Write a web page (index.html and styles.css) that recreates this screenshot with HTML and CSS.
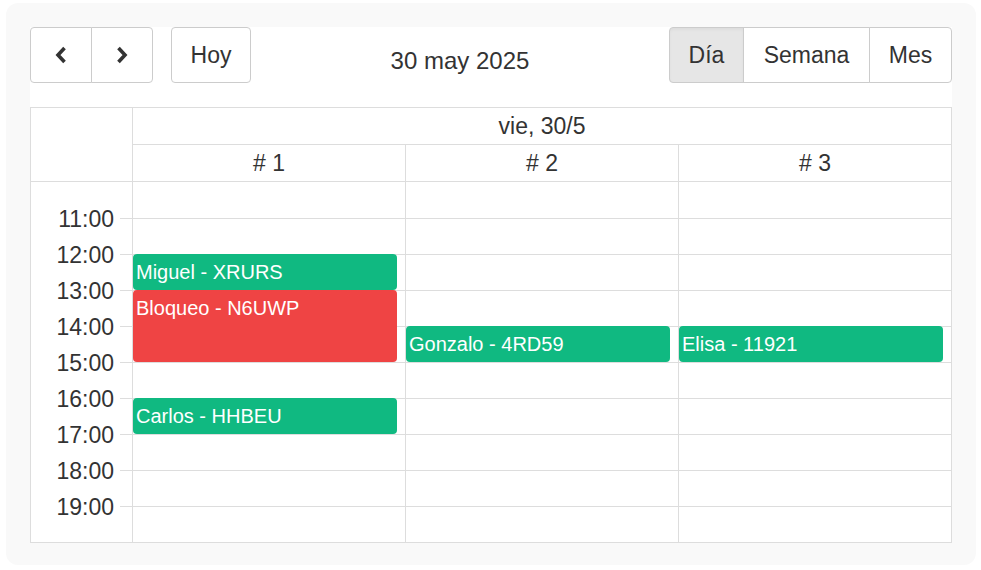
FILE: index.html
```html
<!DOCTYPE html>
<html lang="es">
<head>
    <meta charset="UTF-8">
    <meta name="viewport" content="width=device-width, initial-scale=1.0">
    <title>Agenda - Día</title>
    <link rel="stylesheet" href="styles.css">
</head>
<body>
    <div class="calendar-wrap">
        <div class="calendar">
            <div class="toolbar">
                <div class="toolbar-left">
                    <div class="btn-group">
                        <button class="btn btn-icon prev-btn">
                            <svg width="14" height="18" viewBox="0 0 14 18"><polyline points="10.5,2 4,9 10.5,16" fill="none" stroke="#333" stroke-width="3.6"/></svg>
                        </button>
                        <button class="btn btn-icon next-btn">
                            <svg width="14" height="18" viewBox="0 0 14 18"><polyline points="3.5,2 10,9 3.5,16" fill="none" stroke="#333" stroke-width="3.6"/></svg>
                        </button>
                    </div>
                    <button class="btn today-btn">Hoy</button>
                </div>

                <h2 class="title">30 may 2025</h2>

                <div class="btn-group">
                    <button class="btn day-btn active">Día</button>
                    <button class="btn week-btn">Semana</button>
                    <button class="btn month-btn">Mes</button>
                </div>
            </div>

            <div class="grid">
                <div class="grid-head">
                    <div class="axis-head"></div>
                    <div class="day-head">vie, 30/5</div>
                    <div class="res-head"># 1</div>
                    <div class="res-head"># 2</div>
                    <div class="res-head"># 3</div>
                </div>

                <div class="grid-body">
                    <div class="axis">
                        <div class="axis-slot"><span>11:00</span></div>
                        <div class="axis-slot"><span>12:00</span></div>
                        <div class="axis-slot"><span>13:00</span></div>
                        <div class="axis-slot"><span>14:00</span></div>
                        <div class="axis-slot"><span>15:00</span></div>
                        <div class="axis-slot"><span>16:00</span></div>
                        <div class="axis-slot"><span>17:00</span></div>
                        <div class="axis-slot"><span>18:00</span></div>
                        <div class="axis-slot"><span>19:00</span></div>
                        <div class="axis-slot last"></div>
                    </div>

                    <div class="column" id="res1">
                        <div class="slot"></div><div class="slot"></div><div class="slot"></div><div class="slot"></div><div class="slot"></div>
                        <div class="slot"></div><div class="slot"></div><div class="slot"></div><div class="slot"></div><div class="slot"></div>
                        <div class="event booking" style="top: 72px; height: 36px;">Miguel - XRURS</div>
                        <div class="event block" style="top: 108px; height: 72px;">Bloqueo - N6UWP</div>
                        <div class="event booking" style="top: 216px; height: 36px;">Carlos - HHBEU</div>
                    </div>

                    <div class="column" id="res2">
                        <div class="slot"></div><div class="slot"></div><div class="slot"></div><div class="slot"></div><div class="slot"></div>
                        <div class="slot"></div><div class="slot"></div><div class="slot"></div><div class="slot"></div><div class="slot"></div>
                        <div class="event booking" style="top: 144px; height: 36px;">Gonzalo - 4RD59</div>
                    </div>

                    <div class="column" id="res3">
                        <div class="slot"></div><div class="slot"></div><div class="slot"></div><div class="slot"></div><div class="slot"></div>
                        <div class="slot"></div><div class="slot"></div><div class="slot"></div><div class="slot"></div><div class="slot"></div>
                        <div class="event booking" style="top: 144px; height: 36px;">Elisa - 11921</div>
                    </div>
                </div>
            </div>
        </div>
    </div>
</body>
</html>
```

FILE: styles.css
```css
* {
    margin: 0;
    padding: 0;
    box-sizing: border-box;
    font-family: 'Liberation Sans', Arial, sans-serif;
}

:root {
    --line: #dddddd;
    --btn-border: #cccccc;
    --text: #333333;
    --green: #10b981;
    --red: #ef4444;
}

body {
    background-color: #ffffff;
    color: var(--text);
}

.calendar-wrap {
    width: 970px;
    margin: 3px 0 0 6px;
    padding: 24px 24px 22px;
    background-color: #f9f9f9;
    border-radius: 12px;
}

.calendar {
    background-color: #ffffff;
}

/* toolbar */
.toolbar {
    display: flex;
    justify-content: space-between;
    align-items: center;
    height: 56px;
    margin-bottom: 24px;
}

.toolbar-left {
    display: flex;
    gap: 18px;
}

.btn-group {
    display: flex;
}

.btn {
    height: 56px;
    background-color: #ffffff;
    border: 1px solid var(--btn-border);
    border-radius: 4px;
    color: var(--text);
    font-size: 23px;
    cursor: pointer;
    display: flex;
    align-items: center;
    justify-content: center;
}

.btn-group .btn + .btn {
    margin-left: -1px;
}

.btn-group .btn:not(:first-child) {
    border-top-left-radius: 0;
    border-bottom-left-radius: 0;
}

.btn-group .btn:not(:last-child) {
    border-top-right-radius: 0;
    border-bottom-right-radius: 0;
}

.btn-icon {
    width: 62px;
}

.today-btn {
    width: 80px;
}

.day-btn {
    width: 75px;
}

.week-btn {
    width: 127px;
}

.month-btn {
    width: 83px;
}

.btn.active {
    background-color: #e6e6e6;
    box-shadow: inset 0 2px 3px rgba(0, 0, 0, 0.04);
}

.title {
    font-size: 24px;
    font-weight: 400;
    line-height: 28px;
    margin-top: 11px;
}

/* grid */
.grid {
    border-left: 1px solid var(--line);
    border-top: 1px solid var(--line);
}

.grid-head {
    display: grid;
    grid-template-columns: 102px repeat(3, 1fr);
    grid-template-rows: 37px 37px;
}

.axis-head,
.day-head,
.res-head {
    border-right: 1px solid var(--line);
    border-bottom: 1px solid var(--line);
    display: flex;
    align-items: center;
    justify-content: center;
    font-size: 23px;
}

.axis-head {
    grid-row: span 2;
}

.day-head {
    grid-column: span 3;
}

.grid-body {
    display: grid;
    grid-template-columns: 102px repeat(3, 1fr);
}

.axis {
    display: flex;
    flex-direction: column;
    border-right: 1px solid var(--line);
}

.axis-slot {
    height: 36px;
    display: flex;
    align-items: flex-end;
    justify-content: flex-end;
    padding-right: 18px;
    background: linear-gradient(var(--line), var(--line)) no-repeat right bottom / 12px 1px;
    font-size: 23px;
}

.axis-slot:first-child,
.column .slot:first-child {
    height: 37px;
}

.axis-slot span {
    line-height: 26px;
    transform: translateY(13px);
}

.axis-slot.last {
    background: none;
    border-bottom: 1px solid var(--line);
}

.column {
    position: relative;
    display: flex;
    flex-direction: column;
    border-right: 1px solid var(--line);
}

.slot {
    height: 36px;
    border-bottom: 1px solid var(--line);
}

.event {
    position: absolute;
    left: 0;
    right: 8px;
    padding: 6px 3px 0;
    border-radius: 4px;
    color: #ffffff;
    font-size: 20px;
    line-height: 24px;
    white-space: nowrap;
    overflow: hidden;
}

.event.booking {
    background-color: var(--green);
}

.event.block {
    background-color: var(--red);
}
```
